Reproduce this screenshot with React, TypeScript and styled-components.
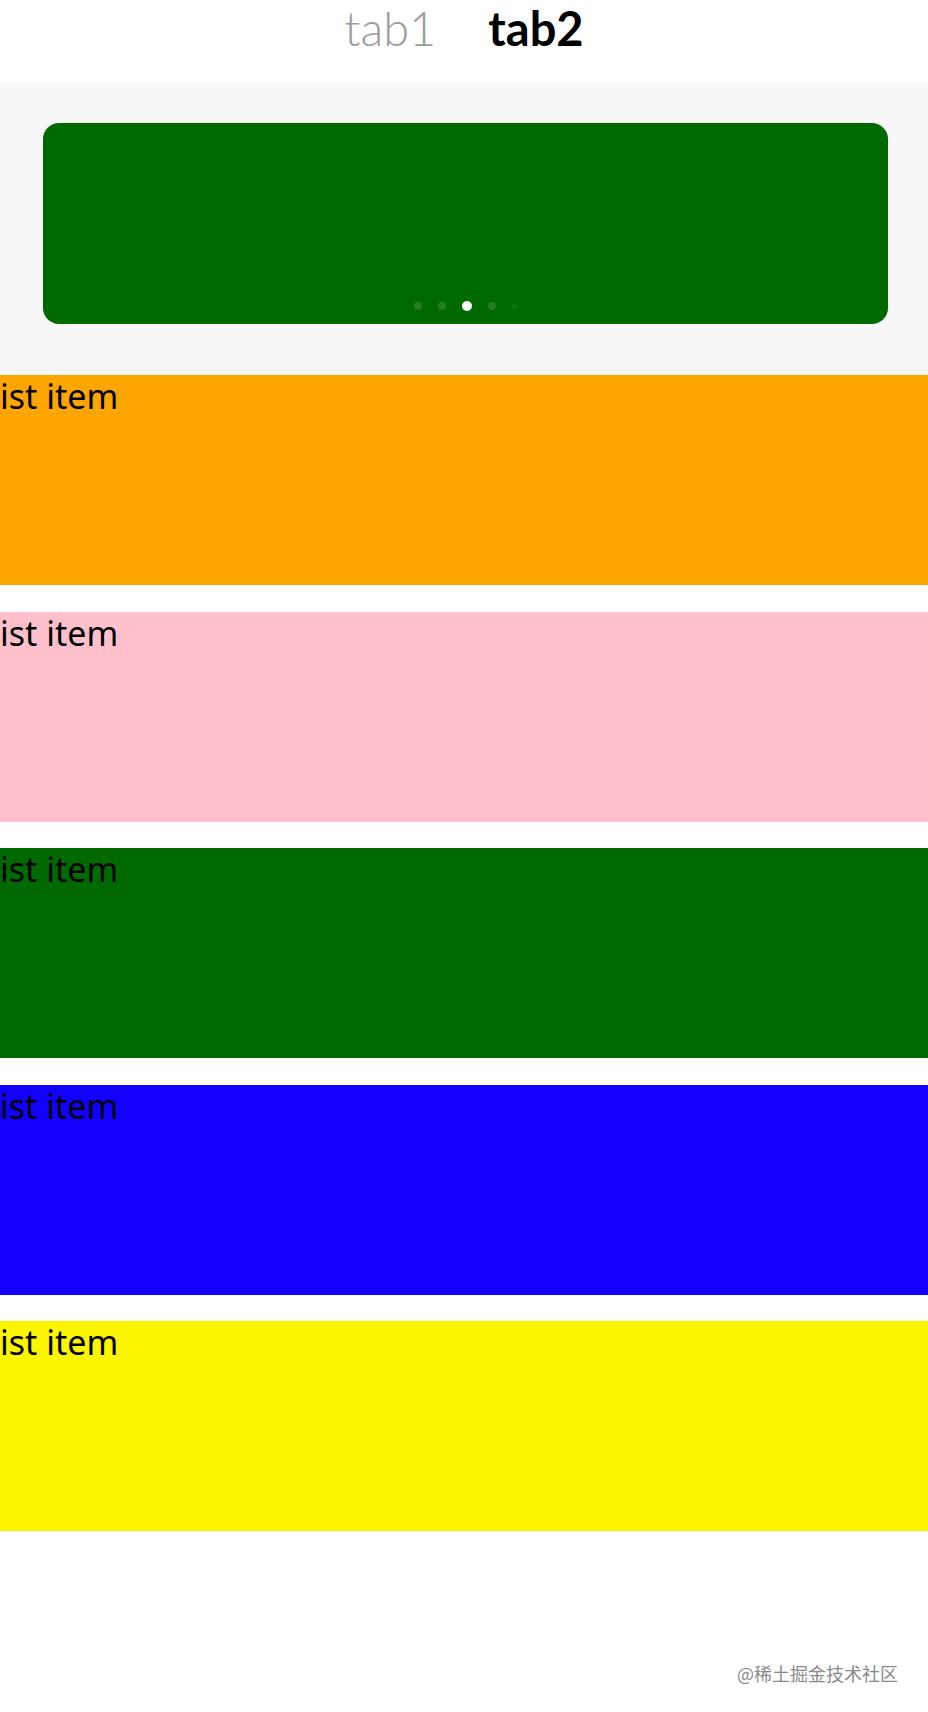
import React from 'react';
import styled, { createGlobalStyle } from 'styled-components';

const GlobalStyle = createGlobalStyle`
  html, body {
    margin: 0;
    padding: 0;
    background: #ffffff;
  }
  * {
    box-sizing: border-box;
  }
`;

const Page = styled.div`
  position: relative;
  width: 928px;
  height: 1712px;
  overflow: hidden;
  background: #ffffff;
  font-family: 'Noto Sans', 'Open Sans', sans-serif;
`;

const TabBar = styled.div`
  display: flex;
  justify-content: center;
  align-items: flex-start;
  gap: 52px;
  height: 83px;
`;

const Tab = styled.div<{ $active?: boolean }>`
  font-family: Lato, 'Open Sans', sans-serif;
  font-size: 47px;
  line-height: 57px;
  font-weight: ${(p) => (p.$active ? 700 : 300)};
  color: ${(p) => (p.$active ? '#000000' : '#9c9c9c')};
`;

const SwiperArea = styled.div`
  background: #f8f8f8;
  padding: 40px 40px 51px 43px;
`;

const Banner = styled.div`
  height: 201px;
  border-radius: 16px;
  background: #006a00;
  display: flex;
  align-items: flex-end;
  justify-content: center;
  padding-bottom: 13px;
`;

const Indicator = styled.div`
  display: flex;
  align-items: center;
  gap: 16px;
  height: 10px;
`;

const Dot = styled.span<{ $size: number; $active?: boolean; $faint?: boolean }>`
  width: ${(p) => p.$size}px;
  height: ${(p) => p.$size}px;
  border-radius: 50%;
  background: ${(p) =>
    p.$active ? '#ffffff' : p.$faint ? 'rgba(255,255,255,0.07)' : 'rgba(255,255,255,0.14)'};
`;

const List = styled.div`
  display: flex;
  flex-direction: column;
  gap: 26.5px;
`;

const ListItem = styled.div<{ $bg: string }>`
  height: 210px;
  background: ${(p) => p.$bg};
  color: #000000;
  font-size: 34px;
  line-height: 40px;
  padding-top: 1px;
`;

const Watermark = styled.div`
  position: absolute;
  right: 30px;
  top: 1663px;
  font-family: 'Noto Sans CJK SC', sans-serif;
  font-size: 18px;
  line-height: 20px;
  color: #8a8a8a;
  text-shadow: 0 1px 1px rgba(255, 255, 255, 0.8);
`;

const items = ['orange', 'pink', '#006a00', '#1200ff', '#fcf500'];
const dots = [
  { size: 8 },
  { size: 8 },
  { size: 10, active: true },
  { size: 8 },
  { size: 5, faint: true },
];

const App = () => {
  return (
    <Page>
      <GlobalStyle />
      <TabBar>
        <Tab>tab1</Tab>
        <Tab $active>tab2</Tab>
      </TabBar>
      <SwiperArea>
        <Banner>
          <Indicator>
            {dots.map((d, i) => (
              <Dot key={i} $size={d.size} $active={d.active} $faint={d.faint} />
            ))}
          </Indicator>
        </Banner>
      </SwiperArea>
      <List>
        {items.map((color, i) => (
          <ListItem key={i} $bg={color}>
            ist item
          </ListItem>
        ))}
      </List>
      <Watermark>@稀土掘金技术社区</Watermark>
    </Page>
  );
};

export default App;
